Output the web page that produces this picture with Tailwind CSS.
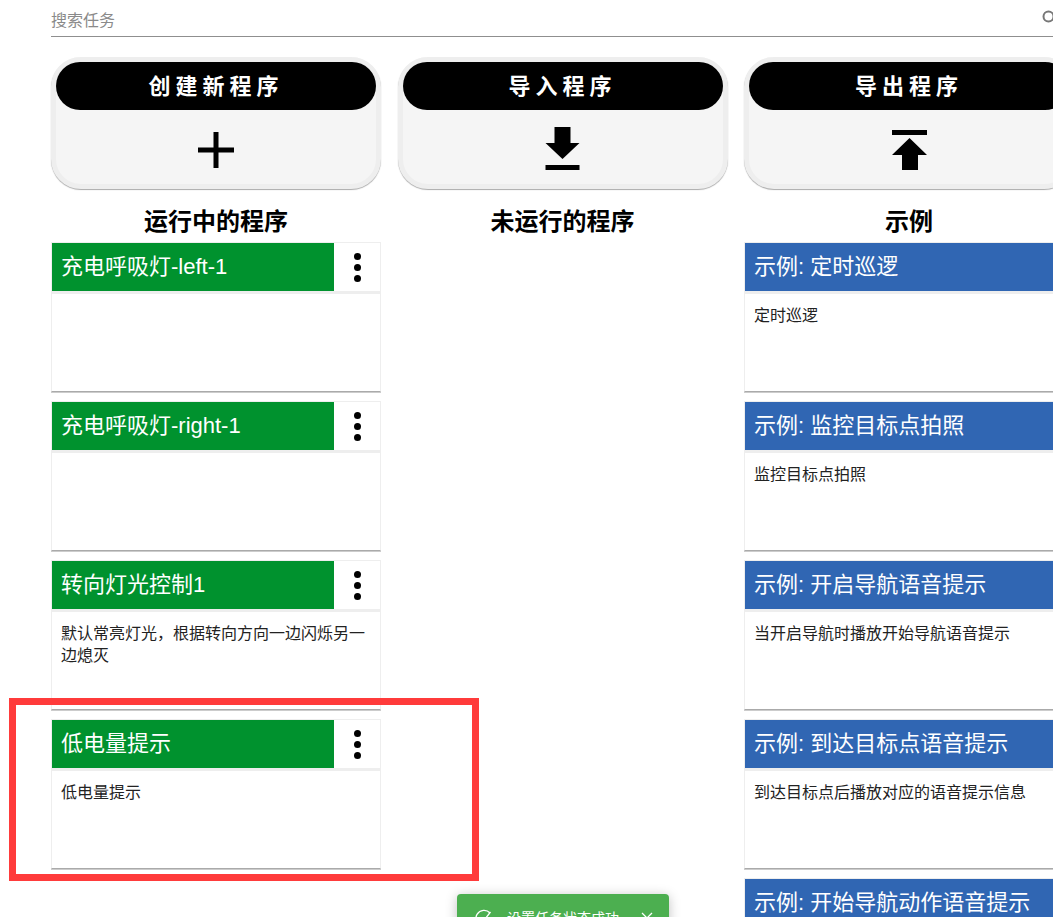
<!DOCTYPE html>
<html lang="zh-CN">
  <head>
    <meta charset="UTF-8" />
    <meta name="viewport" content="width=device-width, initial-scale=1.0" />
    <title>任务程序</title>
    <script src="https://cdn.jsdelivr.net/npm/@tailwindcss/browser@4"></script>
  </head>
  <body class="relative bg-white h-[917px] w-[1053px] overflow-hidden font-['Liberation_Sans','Noto_Sans_CJK_SC',sans-serif]">
    <div class="pl-[51px]">
      <!-- 搜索 -->
      <div class="flex items-center justify-between h-[37px] pt-[5px] border-b border-[#8f8f8f]">
        <span class="text-[16px] text-[#8a8a8a]">搜索任务</span>
        <svg class="w-[16px] h-[16px] -mr-[5px] -mt-[5px] shrink-0" viewBox="0 0 16 16" fill="none" stroke="#777777" stroke-width="2">
          <circle cx="6.5" cy="6.5" r="5" />
        </svg>
      </div>

      <div class="flex gap-[16.5px] mt-[20px] w-[1100px]">
        <!-- 运行中 -->
        <div class="w-[330px] shrink-0">
          <div class="h-[132px] rounded-[30px] border-[5px] border-[#eeeeee] bg-[#f5f5f5] shadow-[0_1px_1px_#aaaaaa]">
            <div class="h-[48px] rounded-[24px] bg-black text-white flex items-center justify-center text-[22px] font-bold tracking-[5px]">创建新程序</div>
            <svg class="w-[36px] h-[44px] mx-auto mt-[16px]" viewBox="0 0 36 44">
              <path d="M0 21.500h36v5H0zM15.500 6h5v36h-5z" fill="#000" />
            </svg>
          </div>
          <h2 class="mt-[16px] h-[37px] text-center text-[24px] leading-[34px] font-bold text-black">运行中的程序</h2>
          <div class="flex flex-col gap-[9px]">
            <div class="h-[150px] border border-[#eeeeee] border-b-[#aaaaaa] shadow-[0_1px_0_#cccccc]">
              <div class="flex h-[48px]">
                <div class="w-[282px] bg-[#00922e] text-white text-[22px] leading-[48px] pl-[9px]">充电呼吸灯-left-1</div>
                <div class="flex-1 flex flex-col items-center justify-center gap-[4px]">
                  <span class="w-[7px] h-[7px] rounded-full bg-black"></span><span class="w-[7px] h-[7px] rounded-full bg-black"></span><span class="w-[7px] h-[7px] rounded-full bg-black"></span>
                </div>
              </div>
              <div class="border-t-[3px] border-[#eeeeee] px-[9px] pt-[11px] text-[16px] leading-[22px] text-[#222222]"></div>
            </div>
            <div class="h-[150px] border border-[#eeeeee] border-b-[#aaaaaa] shadow-[0_1px_0_#cccccc]">
              <div class="flex h-[48px]">
                <div class="w-[282px] bg-[#00922e] text-white text-[22px] leading-[48px] pl-[9px]">充电呼吸灯-right-1</div>
                <div class="flex-1 flex flex-col items-center justify-center gap-[4px]">
                  <span class="w-[7px] h-[7px] rounded-full bg-black"></span><span class="w-[7px] h-[7px] rounded-full bg-black"></span><span class="w-[7px] h-[7px] rounded-full bg-black"></span>
                </div>
              </div>
              <div class="border-t-[3px] border-[#eeeeee] px-[9px] pt-[11px] text-[16px] leading-[22px] text-[#222222]"></div>
            </div>
            <div class="h-[150px] border border-[#eeeeee] border-b-[#aaaaaa] shadow-[0_1px_0_#cccccc]">
              <div class="flex h-[48px]">
                <div class="w-[282px] bg-[#00922e] text-white text-[22px] leading-[48px] pl-[9px]">转向灯光控制1</div>
                <div class="flex-1 flex flex-col items-center justify-center gap-[4px]">
                  <span class="w-[7px] h-[7px] rounded-full bg-black"></span><span class="w-[7px] h-[7px] rounded-full bg-black"></span><span class="w-[7px] h-[7px] rounded-full bg-black"></span>
                </div>
              </div>
              <div class="border-t-[3px] border-[#eeeeee] px-[9px] pt-[11px] text-[16px] leading-[22px] text-[#222222]">默认常亮灯光，根据转向方向一边闪烁另一边熄灭</div>
            </div>
            <div class="h-[150px] border border-[#eeeeee] border-b-[#aaaaaa] shadow-[0_1px_0_#cccccc]">
              <div class="flex h-[48px]">
                <div class="w-[282px] bg-[#00922e] text-white text-[22px] leading-[48px] pl-[9px]">低电量提示</div>
                <div class="flex-1 flex flex-col items-center justify-center gap-[4px]">
                  <span class="w-[7px] h-[7px] rounded-full bg-black"></span><span class="w-[7px] h-[7px] rounded-full bg-black"></span><span class="w-[7px] h-[7px] rounded-full bg-black"></span>
                </div>
              </div>
              <div class="border-t-[3px] border-[#eeeeee] px-[9px] pt-[11px] text-[16px] leading-[22px] text-[#222222]">低电量提示</div>
            </div>
          </div>
        </div>

        <!-- 未运行 -->
        <div class="w-[330px] shrink-0">
          <div class="h-[132px] rounded-[30px] border-[5px] border-[#eeeeee] bg-[#f5f5f5] shadow-[0_1px_1px_#aaaaaa]">
            <div class="h-[48px] rounded-[24px] bg-black text-white flex items-center justify-center text-[22px] font-bold tracking-[5px]">导入程序</div>
            <svg class="w-[36px] h-[44px] mx-auto mt-[16px]" viewBox="0 0 36 44">
              <path d="M9.500 1h16v16h9L17.500 33 .5 17h9zM.5 39h34v5H.5z" fill="#000" />
            </svg>
          </div>
          <h2 class="mt-[16px] h-[37px] text-center text-[24px] leading-[34px] font-bold text-black">未运行的程序</h2>
        </div>

        <!-- 示例 -->
        <div class="w-[330px] shrink-0">
          <div class="h-[132px] rounded-[30px] border-[5px] border-[#eeeeee] bg-[#f5f5f5] shadow-[0_1px_1px_#aaaaaa]">
            <div class="h-[48px] rounded-[24px] bg-black text-white flex items-center justify-center text-[22px] font-bold tracking-[5px]">导出程序</div>
            <svg class="w-[36px] h-[44px] mx-auto mt-[16px]" viewBox="0 0 36 44">
              <path d="M1 4h35v5H1zM18.500 12 36 29h-9v15H11V29H1z" fill="#000" />
            </svg>
          </div>
          <h2 class="mt-[16px] h-[37px] text-center text-[24px] leading-[34px] font-bold text-black">示例</h2>
          <div class="flex flex-col gap-[9px]">
            <div class="h-[150px] border border-[#eeeeee] border-b-[#aaaaaa] shadow-[0_1px_0_#cccccc]">
              <div class="h-[48px] bg-[#3066b3] text-white text-[22px] leading-[48px] pl-[9px]">示例: 定时巡逻</div>
              <div class="border-t-[3px] border-[#eeeeee] px-[9px] pt-[11px] text-[16px] leading-[22px] text-[#222222]">定时巡逻</div>
            </div>
            <div class="h-[150px] border border-[#eeeeee] border-b-[#aaaaaa] shadow-[0_1px_0_#cccccc]">
              <div class="h-[48px] bg-[#3066b3] text-white text-[22px] leading-[48px] pl-[9px]">示例: 监控目标点拍照</div>
              <div class="border-t-[3px] border-[#eeeeee] px-[9px] pt-[11px] text-[16px] leading-[22px] text-[#222222]">监控目标点拍照</div>
            </div>
            <div class="h-[150px] border border-[#eeeeee] border-b-[#aaaaaa] shadow-[0_1px_0_#cccccc]">
              <div class="h-[48px] bg-[#3066b3] text-white text-[22px] leading-[48px] pl-[9px]">示例: 开启导航语音提示</div>
              <div class="border-t-[3px] border-[#eeeeee] px-[9px] pt-[11px] text-[16px] leading-[22px] text-[#222222]">当开启导航时播放开始导航语音提示</div>
            </div>
            <div class="h-[150px] border border-[#eeeeee] border-b-[#aaaaaa] shadow-[0_1px_0_#cccccc]">
              <div class="h-[48px] bg-[#3066b3] text-white text-[22px] leading-[48px] pl-[9px]">示例: 到达目标点语音提示</div>
              <div class="border-t-[3px] border-[#eeeeee] px-[9px] pt-[11px] text-[16px] leading-[22px] text-[#222222]">到达目标点后播放对应的语音提示信息</div>
            </div>
            <div class="h-[150px] border border-[#eeeeee] border-b-[#aaaaaa] shadow-[0_1px_0_#cccccc]">
              <div class="h-[48px] bg-[#3066b3] text-white text-[22px] leading-[48px] pl-[9px]">示例: 开始导航动作语音提示</div>
            </div>
          </div>
        </div>
      </div>
    </div>

    <!-- 红框标注 -->
    <div class="absolute left-[9px] top-[698px] w-[470px] h-[183px] border-[7px] border-[#ff3b3b]"></div>

    <!-- 提示 -->
    <div class="absolute left-[457px] top-[894px] w-[212px] h-[48px] rounded-[4px] bg-[#4caf50] shadow-[0_2px_12px_rgba(0,0,0,0.25)] flex items-center text-white">
      <svg class="ml-[18px] w-[18px] h-[18px] shrink-0" viewBox="0 0 18 18" fill="none" stroke="#ffffff" stroke-width="1.300">
        <path d="M15 4A8 8 0 1 0 17 9" />
        <path d="M5.500 8.500 8.500 12 15.500 3" />
      </svg>
      <span class="ml-[14px] text-[14px] whitespace-nowrap">设置任务状态成功</span>
      <svg class="ml-[22px] w-[12px] h-[12px] shrink-0" viewBox="0 0 12 12" stroke="#ffffff" stroke-width="1.300">
        <path d="M1 1l10 10M11 1 1 11" />
      </svg>
    </div>
  </body>
</html>
